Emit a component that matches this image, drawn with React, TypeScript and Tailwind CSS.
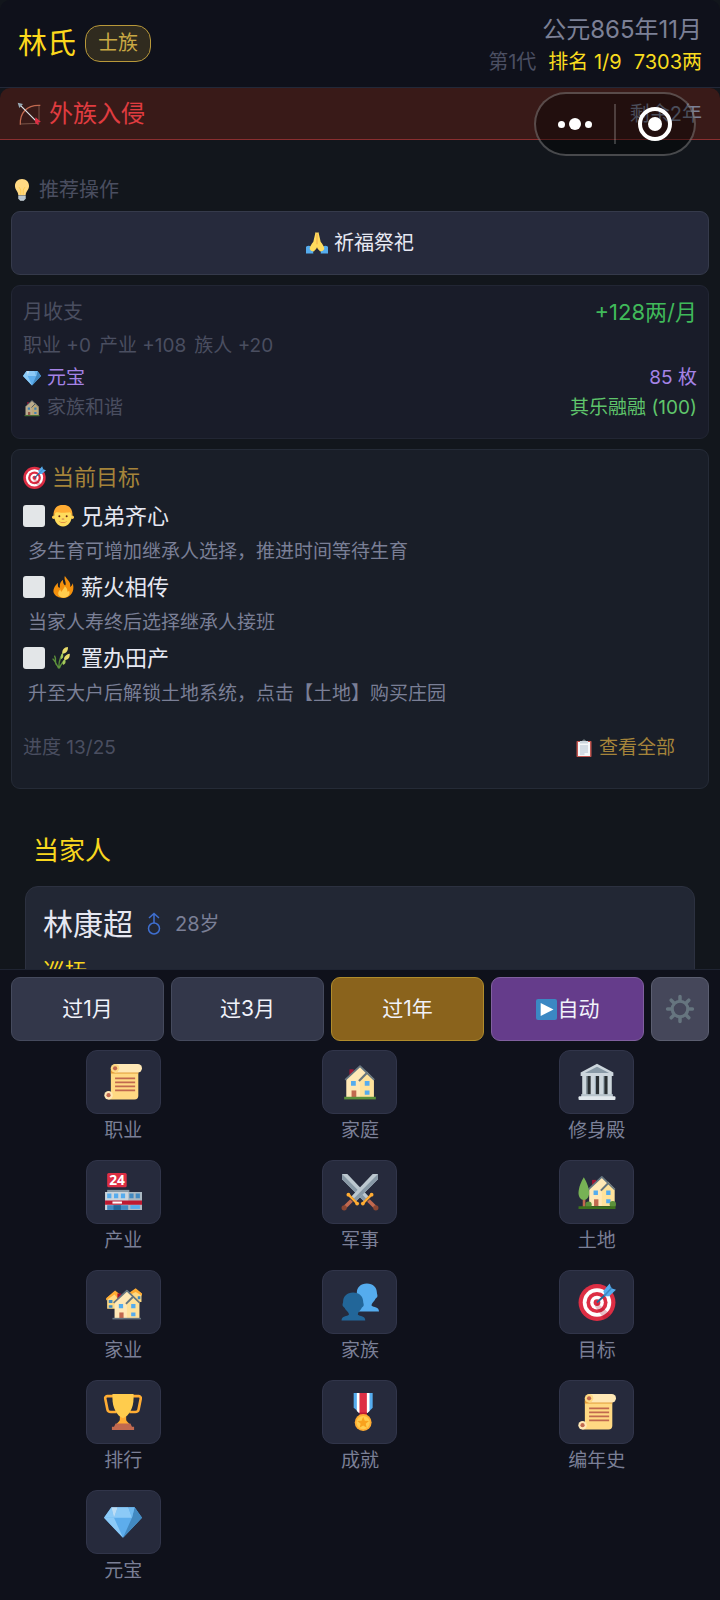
import { useState, type ReactNode } from "react"

type IconProps = { className?: string; children?: ReactNode }

function Icon({ className = "", children }: IconProps) {
  return (
    <svg viewBox="0 0 36 36" className={`shrink-0 overflow-visible ${className}`} aria-hidden="true">
      {children}
    </svg>
  )
}

function HouseShape() {
  return (
    <g>
      <path d="M8 6h4v7H8z" fill="#9c1434" />
      <path d="M5 15 18 3l13 12v18H5z" fill="#ffe8b6" />
      <path d="M18 14 24.500 8 31 15v18H18z" fill="#ffe29a" />
      <path d="M4 16 18 3l13.500 13" fill="none" stroke="#66757f" strokeWidth="1.800" strokeLinejoin="round" />
      <path d="m17 17 7.500-7.500" stroke="#66757f" strokeWidth="2" />
      <path d="M9.500 17h4.500v4.500H9.500zM22.500 17H27v4.500h-4.500zM22.500 26H27v4h-4.500z" fill="#55acee" />
      <path d="M10 26h4.500v7H10z" fill="#c1694f" />
    </g>
  )
}

function Home({ className }: IconProps) {
  return (
    <Icon className={className}>
      <HouseShape />
      <path d="M3 32h30v2.500H3z" fill="#5c913b" />
    </Icon>
  )
}

function Scroll({ className }: IconProps) {
  return (
    <Icon className={className}>
      <path d="M6.500 4h26v27a3.500 3.500 0 0 1-3.500 3.500H4V29h2.500z" fill="#ffd983" />
      <path d="M6.500 7h26v3h-26z" fill="#e39f3d" />
      <path d="M10 1h22a4 4 0 0 1 0 8H10z" fill="#ffe8b6" />
      <circle cx="10.500" cy="5" r="4" fill="#ffd983" />
      <circle cx="10.500" cy="5" r="2" fill="#c1694f" />
      <circle cx="4.300" cy="30.500" r="4" fill="#ffe8b6" />
      <circle cx="4.300" cy="30.500" r="2" fill="#c1694f" />
      <path d="M10.500 14.500h19M10.500 18.300h19M10.500 22.200h19M10.500 26h19" stroke="#c1694f" strokeWidth="1.700" />
    </Icon>
  )
}

function Temple({ className }: IconProps) {
  return (
    <Icon className={className}>
      <path d="M4 12h28v20H4z" fill="#292f33" />
      <path d="M4 12h4v19H4zM12 12h4.500v19H12zM20 12h4.500v19H20zM28 12h4v19h-4z" fill="#ccd6dd" />
      <path d="M8 12h1v19H8zM16 12h1v19H16zM24 12h1v19H24z" fill="#99aab5" />
      <path d="M18 .800 33.500 9v3.300h-31V9z" fill="#ccd6dd" />
      <path d="m18 3.500 11.500 6h-23z" fill="#8899a6" />
      <path d="M3 29.500h30v3H3z" fill="#b8c5cd" />
      <rect x=".5" y="31.500" width="35" height="3.500" rx="1" fill="#e1e8ed" />
    </Icon>
  )
}

function Store({ className }: IconProps) {
  return (
    <Icon className={className}>
      <path d="M3 16h21v3H3z" fill="#8899a6" />
      <path d="M1 18h35v17H1z" fill="#ccd6dd" />
      <path d="M23 18h13v17H23z" fill="#aab8c2" />
      <path d="M3 19.500h4v4.500H3zM9.500 19.500h4v4.500h-4zM16 19.500h4v4.500h-4z" fill="#55acee" />
      <path d="M24 19.500h4v4.500h-4zM30 19.500h4v4.500h-4z" fill="#4289c1" />
      <path d="M1 26h35v4H1z" fill="#be1931" />
      <path d="M8 27h9v2H8z" fill="#fff" />
      <path d="M3 30.500h20V35H3z" fill="#4289c1" />
      <path d="M9 30.500h7V35H9z" fill="#226699" />
      <path d="M25 30.500h9V34h-9z" fill="#55acee" />
      <rect x="3" y="0" width="18.500" height="13.500" rx="1.500" fill="#dd2e44" />
      <text
        x="12.300"
        y="11"
        textAnchor="middle"
        fontSize="13"
        fontWeight="700"
        fill="#fff"
        className="font-['Open_Sans',sans-serif]"
      >
        24
      </text>
    </Icon>
  )
}

function Swords({ className }: IconProps) {
  const sword = (
    <g>
      <path d="M35 1v5L14.500 26.500l-4.500-4.500L30 1z" fill="#bcc8d0" />
      <path d="M35 1v5L14.500 26.500l-2.300-2.300z" fill="#8899a6" />
      <path d="m7.500 21 7.500 7.500" stroke="#ffac33" strokeWidth="2.200" strokeLinecap="round" />
      <path d="m10 26-6 6" stroke="#c1694f" strokeWidth="3.500" />
      <circle cx="7" cy="20.500" r="1.800" fill="#ffac33" />
      <circle cx="15.300" cy="29" r="1.800" fill="#ffac33" />
      <circle cx="3" cy="33" r="2.500" fill="#8a4633" />
    </g>
  )
  return (
    <Icon className={className}>
      <g transform="matrix(-1 0 0 1 36 0)">{sword}</g>
      {sword}
    </Icon>
  )
}

function Garden({ className }: IconProps) {
  return (
    <Icon className={className}>
      <g transform="translate(6 1) scale(.92)">
        <HouseShape />
      </g>
      <path d="M4.500 22h2.500v11H4.500z" fill="#c1694f" />
      <path d="M5.500 4C8 8 10.500 14 10.500 19c0 4-2 6.500-5 6.500S.5 23 .5 19C.5 14 3 8 5.500 4z" fill="#77b255" />
      <circle cx="10" cy="30" r="3" fill="#5c913b" />
      <circle cx="33" cy="29.500" r="3" fill="#5c913b" />
      <path d="M.5 31.500h35V34H.5z" fill="#3e721d" />
    </Icon>
  )
}

function Houses({ className }: IconProps) {
  return (
    <Icon className={className}>
      <path d="m3 14 7.500-6 8 6v10.500H3z" fill="#ffd983" />
      <path d="m2 14.500 8.500-7.500 8 6.500-4 3L10 11l-8 5.500z" fill="#ffac33" />
      <path d="m24 10 6-4 5.500 4v8H24z" fill="#ffd983" />
      <path d="m23 10 7-5 6 5v2l-6-3.500-7 3.500z" fill="#ffac33" />
      <path d="M4.500 16h3.500v3H4.500zM4.500 21h3.500v2.500H4.500zM32 12.500h2.500v3H32z" fill="#4289c1" />
      <g transform="translate(5.500 4.500) scale(.9)">
        <HouseShape />
      </g>
      <path d="M8 33h27v1.500H8z" fill="#66757f" />
    </Icon>
  )
}

function People({ className }: IconProps) {
  const bust =
    "M11 0c6 0 9.500 4 9.500 8.500 0 1.500 1 3 .3 4.200-.5.9-1.300.8-1.800 2C18 17.500 15.500 18 15.500 21c2 1.500 7 1 7 5.500H0C0 22 5.500 22.500 7 21c0-3-3-3.500-4-6.300-.6-1.200-1.300-1.100-1.800-2-.7-1.200.3-2.700.3-4.200C1.500 4 5 0 11 0z"
  return (
    <Icon className={className}>
      <path d={bust} fill="#55acee" transform="translate(13.500 .5)" />
      <path d={bust} fill="#269" transform="translate(.5 9)" />
    </Icon>
  )
}

function Target({ className }: IconProps) {
  return (
    <Icon className={className}>
      <circle cx="18" cy="18.500" r="17.500" fill="#dd2e44" />
      <circle cx="18" cy="18.500" r="13.500" fill="#fff" />
      <circle cx="18" cy="18.500" r="10" fill="#dd2e44" />
      <circle cx="18" cy="18.500" r="6.500" fill="#fff" />
      <circle cx="18" cy="18.500" r="3.200" fill="#dd2e44" />
      <path d="m18.500 19 12.500 11a17.500 17.500 0 0 1-6 4.500L16 22z" fill="#a0041e" opacity=".25" />
      <path d="M18 18.500 28 9" stroke="#226699" strokeWidth="1.800" />
      <path d="M24 7.500 30 .500l1.500 4.500L36 6.500l-6.500 6h-4z" fill="#55acee" />
      <path d="m25 12 7-7.500" stroke="#3b88c3" strokeWidth="1.500" />
    </Icon>
  )
}

function Trophy({ className }: IconProps) {
  return (
    <Icon className={className}>
      <path
        d="M9 3H3a2 2 0 0 0-1.800 2.500l2 10C3.500 17.200 5 18 6.500 18H12M27 3h6a2 2 0 0 1 1.800 2.500l-2 10C32.500 17.200 31 18 29.500 18H24"
        fill="none"
        stroke="#ffac33"
        strokeWidth="2.500"
      />
      <path d="M15 20h6v5c0 2 3 3 3 5H12c0-2 3-3 3-5z" fill="#ffac33" />
      <path d="M8 1h20v4c0 9-4 16.500-10 19C12 21.500 8 14 8 5z" fill="#ffcc4d" />
      <path d="M11 29h14l1.500 3h2v3h-21v-3h2z" fill="#c1694f" />
    </Icon>
  )
}

function Medal({ className }: IconProps) {
  return (
    <Icon className={className}>
      <path d="M12 0h18v14l-5 5h-7l-6-5z" fill="#55acee" />
      <path d="M15 0h12v17l-2 2h-8l-2-2z" fill="#fff" />
      <path d="M17.500 0h7v19h-7z" fill="#dd2e44" />
      <path d="M17.500 18.500h7v3h-7z" fill="#be1931" />
      <circle cx="21" cy="28" r="8" fill="#ffac33" />
      <circle cx="21" cy="28" r="6.300" fill="#ffcc4d" />
      <path d="m21 22.500 1.500 3.700 4 .300-3.100 2.600 1 3.900-3.400-2.100-3.400 2.100 1-3.900-3.100-2.600 4-.300z" fill="#f9a21e" />
    </Icon>
  )
}

function Gem({ className }: IconProps) {
  return (
    <Icon className={className}>
      <path d="M7 4h22l7 10-18 19L0 14z" fill="#5dadec" />
      <path d="M7 4 0 14h9.500zM13 4h10l3.500 10h-17z" fill="#8ccaf7" />
      <path d="M7 4h6L9.500 14z" fill="#bdddf4" />
      <path d="m0 14 18 19L9.500 14z" fill="#8ccaf7" />
      <path d="M29 4 26.500 14H36zM26.500 14H36L18 33z" fill="#4289c1" />
      <path d="M23 4h6l-2.500 10z" fill="#6fb9f0" />
    </Icon>
  )
}

function Bow({ className }: IconProps) {
  return (
    <Icon className={className}>
      <path d="M5 34C4 17 14 4 35 5" fill="none" stroke="#c1694f" strokeWidth="2" />
      <path d="M5 33 33 32 33 5" fill="none" stroke="#99705f" strokeWidth="1" />
      <path d="m4 4 27 27" stroke="#e1e8ed" strokeWidth="1.800" />
      <path d="m1 1 8 2-5.500 6z" fill="#99aab5" />
      <path d="m27 27 1-4 8 7h-4l.5 5-5-3z" fill="#dd2e44" />
    </Icon>
  )
}

function Bulb({ className }: IconProps) {
  return (
    <Icon className={className}>
      <path d="M18 0c7 0 11.500 5 11.500 11.500 0 6-5 8.500-5.500 15H12c-.5-6.500-5.500-9-5.500-15C6.500 5 11 0 18 0z" fill="#ffd983" />
      <path d="m13 13 3 5v8M23 13l-3 5v8" fill="none" stroke="#ffcc4d" strokeWidth="1.500" />
      <path d="M12 27h12v5l-3 3.500h-6L12 32z" fill="#ccd6dd" />
      <path d="M12 29.500h12M12.500 32.500h11" stroke="#99aab5" strokeWidth="1.200" />
    </Icon>
  )
}

function Pray({ className }: IconProps) {
  return (
    <Icon className={className}>
      <path d="M0 24c4-3 8-2 11 3l1 8H0zM36 24c-4-3-8-2-11 3l-1 8h12z" fill="#55acee" />
      <path
        d="M15 3c0-3 2.500-3 3-1 .5-2 3-2 3 1l3 13c3 4 6 8 6 12-2 3-4 4-7 4-2-3-4-4-5-7-1 3-3 4-5 7-3 0-5-1-7-4 0-4 3-8 6-12z"
        fill="#ffdc5d"
      />
      <path d="M18 3v17" stroke="#ef9645" strokeWidth="1.200" />
    </Icon>
  )
}

function Boy({ className }: IconProps) {
  return (
    <Icon className={className}>
      <circle cx="2.800" cy="20" r="2.800" fill="#ffcc4d" />
      <circle cx="33.200" cy="20" r="2.800" fill="#ffcc4d" />
      <path d="M18 1c10 0 14.500 7 14.500 16S27 35 18 35 3.500 26 3.500 17 8 1 18 1z" fill="#ffdc5d" />
      <path d="M18 0C6 0 2 8 2.500 18c1.500-1 2-5 4.500-6 6 1 16 1 22 0 2.500 1 3 5 4.500 6C34 8 30 0 18 0z" fill="#ffac33" />
      <circle cx="12" cy="18.500" r="1.600" fill="#662113" />
      <circle cx="24" cy="18.500" r="1.600" fill="#662113" />
      <path d="M16 23h4" stroke="#c1694f" strokeWidth="1.500" />
      <path d="M11 26.500c4 2 10 2 14 0-2 3-12 3-14 0z" fill="#c1442f" />
    </Icon>
  )
}

function Fire({ className }: IconProps) {
  return (
    <Icon className={className}>
      <path
        d="M35 19c0-2-.3-5-1.300-7-.5 3-1.700 5-4.200 6C32 11 25 6 21 0c-2 6 3 10 1 15-4-1-4-7-4-9-4 3-6 7-5 13-3 1-4-4-3-8-6 5-9 12-7 17 2 5 8 8 15 8 10 0 17-7 17-17z"
        fill="#f4900c"
      />
      <path d="M28 24c-1 1-2 1.500-3 1.500 1-5-3-7-4-9-1 4-4 6-5 9-2 0-2-2-2-4-4 3-5 8-2.500 11 4 4.500 13 4 16-1 1.500-2.500 1.500-5 .5-7.500z" fill="#ffcc4d" />
    </Icon>
  )
}

function Rice({ className }: IconProps) {
  return (
    <Icon className={className}>
      <path d="M11 35C7 27 4 22 1 19M11 35C11 22 14 12 24 3M12 35c2-8 7-12 15-20M8 30C3 25 8 20 4 14" fill="none" stroke="#5c913b" strokeWidth="2.200" />
      <path d="M26 0c-6 0-10 5-9 11 5 0 10-4 9-11zM29 11c-6 1-10 5-9 10 5 1 10-3 9-10z" fill="#e8dc6b" />
      <path d="M17 10c-3 3-3 7-2 10 3-1 5-5 2-10zM21 20c-3 2-5 6-3 9 3 0 6-4 3-9z" fill="#a6c95c" />
    </Icon>
  )
}

function Clipboard({ className }: IconProps) {
  return (
    <Icon className={className}>
      <rect x="3" y="4" width="30" height="32" rx="1.500" fill="#c1554f" />
      <path d="M6 6h24v28H6z" fill="#f5f8fa" />
      <path d="M10 14h16M10 18h16M10 22h16M10 26h16M10 30h9" stroke="#8ea5bb" strokeWidth="1.300" />
      <path d="M10 4h5a3 3 0 0 1 6 0h5v5H10z" fill="#ccd6dd" />
      <circle cx="18" cy="2" r="1.800" fill="#3b4348" />
    </Icon>
  )
}

function Play({ className }: IconProps) {
  return (
    <Icon className={className}>
      <rect width="36" height="36" rx="3.500" fill="#3b88c3" />
      <path d="M8 7v22l22-11z" fill="#fff" />
    </Icon>
  )
}

function Gear({ className }: IconProps) {
  return (
    <Icon className={className}>
      <circle cx="18" cy="18" r="10" fill="none" stroke="#66757f" strokeWidth="4" />
      <path
        d="M18 2v5M18 29v5M2 18h5M29 18h5M6.700 6.700l3.500 3.500M25.800 25.800l3.500 3.500M6.700 29.300l3.500-3.500M25.800 10.200l3.500-3.500"
        stroke="#66757f"
        strokeWidth="4.500"
        strokeLinecap="round"
      />
    </Icon>
  )
}

function Male({ className }: IconProps) {
  return (
    <svg viewBox="0 0 14 24" className={className} aria-label="男">
      <circle cx="7" cy="16.500" r="5.500" fill="none" stroke="#3f6fd0" strokeWidth="1.500" />
      <path d="M7 11V2M2 6l5-4.500L12 6" fill="none" stroke="#3f6fd0" strokeWidth="1.500" />
    </svg>
  )
}

const goals = [
  { icon: Boy, title: "兄弟齐心", desc: "多生育可增加继承人选择，推进时间等待生育" },
  { icon: Fire, title: "薪火相传", desc: "当家人寿终后选择继承人接班" },
  { icon: Rice, title: "置办田产", desc: "升至大户后解锁土地系统，点击【土地】购买庄园" },
]

const menu = [
  { icon: Scroll, label: "职业" },
  { icon: Home, label: "家庭" },
  { icon: Temple, label: "修身殿" },
  { icon: Store, label: "产业" },
  { icon: Swords, label: "军事" },
  { icon: Garden, label: "土地" },
  { icon: Houses, label: "家业" },
  { icon: People, label: "家族" },
  { icon: Target, label: "目标" },
  { icon: Trophy, label: "排行" },
  { icon: Medal, label: "成就" },
  { icon: Scroll, label: "编年史" },
  { icon: Gem, label: "元宝" },
]

function Capsule() {
  return (
    <div className="absolute top-[92px] right-6 flex h-16 w-[162px] items-center rounded-full border-2 border-white/25 bg-black/40">
      <button aria-label="更多" className="flex h-full flex-1 items-center justify-center gap-1">
        <span className="size-[7px] rounded-full bg-white" />
        <span className="size-3 rounded-full bg-white" />
        <span className="size-[7px] rounded-full bg-white" />
      </button>
      <span className="h-10 w-[2px] bg-white/20" />
      <button aria-label="关闭" className="flex h-full flex-1 items-center justify-center">
        <span className="flex size-[34px] items-center justify-center rounded-full border-4 border-white">
          <span className="size-[14px] rounded-full bg-white" />
        </span>
      </button>
    </div>
  )
}

function Header() {
  return (
    <header className="flex h-[88px] shrink-0 items-center justify-between rounded-t-[10px] border-b border-[#232838] bg-[#0f111b] px-[18px]">
      <div className="flex items-center gap-[9px]">
        <h1 className="text-[29px] leading-10 text-[#fcd81c]">林氏</h1>
        <span className="rounded-[15px] border border-[#b8983a] bg-[#302b1f] px-3 text-[20px] leading-[35px] text-[#c9a844]">
          士族
        </span>
      </div>
      <div className="pt-[2px] text-right">
        <p className="text-[24px] leading-[34px] text-[#7c8096]">公元865年11月</p>
        <p className="flex justify-end gap-3 text-[20px] leading-[30px] text-[#f9dc1e]">
          <span className="text-[#4b4f62]">第1代</span>
          <span>排名 1/9</span>
          <span>7303两</span>
        </p>
      </div>
    </header>
  )
}

function IncomeCard() {
  return (
    <section className="mt-[10px] rounded-[9px] border border-[#222634] bg-[#191c29] px-[11px] pt-[9px] pb-[15px] text-[19px] leading-[30px] text-[#4a4e60]">
      <div className="flex justify-between leading-[34px]">
        <h2 className="text-[20px]">月收支</h2>
        <span className="text-[22px] text-[#40b95a]">+128两/月</span>
      </div>
      <p className="flex gap-2 leading-[34px]">
        <span>职业 +0</span>
        <span>产业 +108</span>
        <span>族人 +20</span>
      </p>
      <div className="flex justify-between text-[#a583e6]">
        <span className="flex items-center gap-1.5">
          <Gem className="size-[18px]" />
          元宝
        </span>
        <span>85 枚</span>
      </div>
      <div className="flex justify-between">
        <span className="flex items-center gap-1.5">
          <Home className="size-[18px] opacity-70" />
          家族和谐
        </span>
        <span className="text-[#5fc56b]">其乐融融 (100)</span>
      </div>
    </section>
  )
}

function GoalsCard() {
  const [done, setDone] = useState<string[]>([])

  const toggle = (title: string) => {
    setDone((prev) => (prev.includes(title) ? prev.filter((t) => t !== title) : [...prev, title]))
  }

  return (
    <section className="mt-[10px] rounded-[9px] border border-[#252b37] bg-[#191e28] px-[11px] pt-2 pb-[22px]">
      <h2 className="flex items-center gap-1.5 text-[22px] leading-[38px] text-[#a5843a]">
        <Target className="size-[23px]" />
        当前目标
      </h2>
      <ul className="mt-[2px]">
        {goals.map(({ icon: GoalIcon, title, desc }) => (
          <li key={title}>
            <label className="flex items-center gap-[7px] text-[22px] leading-9 text-[#e6e8f2]">
              <input
                type="checkbox"
                checked={done.includes(title)}
                onChange={() => toggle(title)}
                className="size-[22px] appearance-none rounded-[3px] bg-[#e3e6e8] checked:bg-[#77b255]"
              />
              <GoalIcon className="size-[22px]" />
              {title}
            </label>
            <p className="pl-[5px] text-[19px] leading-[35px] text-[#7a7f96]">{desc}</p>
          </li>
        ))}
      </ul>
      <div className="mt-[19px] flex items-center justify-between pr-[22px] text-[19px] leading-9">
        <span className="text-[#4a4e60]">进度 13/25</span>
        <button className="flex items-center gap-1.5 text-[#a5843a]">
          <Clipboard className="size-[18px]" />
          查看全部
        </button>
      </div>
    </section>
  )
}

function PersonCard() {
  return (
    <section className="px-[14px]">
      <h2 className="mt-[42px] px-2 text-[26px] leading-10 text-[#f9d71e]">当家人</h2>
      <div className="mt-[15px] rounded-[13px] border border-[#2c3140] bg-[#222734] px-[17px] pt-4 pb-6">
        <div className="flex items-center gap-[14px] leading-[42px]">
          <h3 className="text-[30px] text-[#e6e8f2]">林康超</h3>
          <Male className="h-6 w-[14px]" />
          <span className="text-[20px] text-[#7a7f96]">28岁</span>
        </div>
        <p className="mt-2 text-[22px] leading-9 text-[#f9d71e]">巡抚</p>
      </div>
    </section>
  )
}

function BottomBar() {
  const button = "h-16 min-w-0 flex-1 rounded-[9px] border text-[21px] text-[#f1f2fa]"

  return (
    <footer className="shrink-0 border-t border-[#1f2432] bg-[#0f111b] pt-[7px]">
      <div className="flex gap-[7px] px-[11px]">
        <button className={`${button} border-[#454a5d] bg-[#33374a]`}>过1月</button>
        <button className={`${button} border-[#454a5d] bg-[#33374a]`}>过3月</button>
        <button className={`${button} border-[#b08c2c] bg-[#8a631c]`}>过1年</button>
        <button className={`${button} flex items-center justify-center gap-px border-[#80609f] bg-[#653c8b]`}>
          <Play className="size-[21px]" />
          自动
        </button>
        <button aria-label="设置" className="flex h-16 w-[58px] items-center justify-center rounded-[9px] border border-[#5b5e70] bg-[#45475a]">
          <Gear className="size-[28px]" />
        </button>
      </div>
      <nav className="mt-[9px] grid grid-cols-3 gap-y-[14px] px-[5px] pb-[14px]">
        {menu.map(({ icon: MenuIcon, label }) => (
          <button key={label} className="flex flex-col items-center justify-self-center">
            <span className="flex h-16 w-[75px] items-center justify-center rounded-[11px] border border-[#31354a] bg-[#262a3c]">
              <MenuIcon className="size-[38px]" />
            </span>
            <span className="mt-[2px] text-[19px] leading-[30px] text-[#7a7f96]">{label}</span>
          </button>
        ))}
      </nav>
    </footer>
  )
}

export default function App() {
  return (
    <div className="relative flex h-screen flex-col overflow-hidden bg-[#12161c] font-['Inter','Noto_Sans_CJK_SC',sans-serif]">
      <Header />
      <div className="flex h-[52px] shrink-0 items-center justify-between rounded-t-[10px] border-b border-[#8a2f30] bg-[#391a18] pr-[18px] pl-[17px]">
        <strong className="flex items-center gap-2 text-[24px] font-normal text-[#e03c40]">
          <Bow className="size-[24px]" />
          外族入侵
        </strong>
        <span className="text-[20px] text-[#7c8096]">剩余2年</span>
      </div>
      <main className="min-h-0 flex-1 overflow-hidden px-[11px] pt-[35px]">
        <h2 className="flex items-center gap-1.5 text-[20px] leading-[30px] text-[#4a4e60]">
          <Bulb className="size-[22px]" />
          推荐操作
        </h2>
        <button className="mt-[6px] flex h-16 w-full items-center justify-center gap-1.5 rounded-[9px] border border-[#353a4b] bg-[#262a3c] text-[20px] text-[#e6e8f2]">
          <Pray className="size-[22px]" />
          祈福祭祀
        </button>
        <IncomeCard />
        <GoalsCard />
        <PersonCard />
      </main>
      <BottomBar />
      <Capsule />
    </div>
  )
}
